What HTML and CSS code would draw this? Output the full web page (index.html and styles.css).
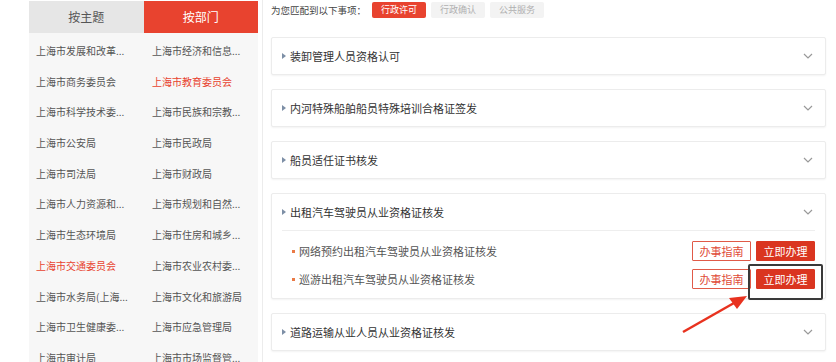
FILE: index.html
```html
<!DOCTYPE html>
<html lang="zh-CN">
<head>
    <meta charset="UTF-8">
    <title>按部门办事</title>
    <link rel="stylesheet" href="styles.css">
</head>
<body>
    <div class="page">
        <div class="side">
            <div class="tabs">
                <div class="tab">按主题</div>
                <div class="tab active">按部门</div>
            </div>
            <ul class="dept-list">
                <li>上海市发展和改革...</li>
                <li>上海市经济和信息...</li>
                <li>上海市商务委员会</li>
                <li class="on">上海市教育委员会</li>
                <li>上海市科学技术委...</li>
                <li>上海市民族和宗教...</li>
                <li>上海市公安局</li>
                <li>上海市民政局</li>
                <li>上海市司法局</li>
                <li>上海市财政局</li>
                <li>上海市人力资源和...</li>
                <li>上海市规划和自然...</li>
                <li>上海市生态环境局</li>
                <li>上海市住房和城乡...</li>
                <li class="on">上海市交通委员会</li>
                <li>上海市农业农村委...</li>
                <li>上海市水务局(上海...</li>
                <li>上海市文化和旅游局</li>
                <li>上海市卫生健康委...</li>
                <li>上海市应急管理局</li>
                <li>上海市审计局</li>
                <li>上海市市场监督管...</li>
            </ul>
        </div>

        <div class="main">
            <div class="filter">
                <span class="filter-label">为您匹配到以下事项：</span>
                <span class="tag active">行政许可</span>
                <span class="tag">行政确认</span>
                <span class="tag">公共服务</span>
            </div>

            <div class="card">
                <div class="card-head">
                    <span class="tri"></span>
                    <span class="card-title">装卸管理人员资格认可</span>
                    <svg class="chev" width="10" height="6" viewBox="0 0 10 6"><polyline points="1,1 5,5 9,1" fill="none" stroke="#999" stroke-width="1.2"/></svg>
                </div>
            </div>

            <div class="card">
                <div class="card-head">
                    <span class="tri"></span>
                    <span class="card-title">内河特殊船舶船员特殊培训合格证签发</span>
                    <svg class="chev" width="10" height="6" viewBox="0 0 10 6"><polyline points="1,1 5,5 9,1" fill="none" stroke="#999" stroke-width="1.2"/></svg>
                </div>
            </div>

            <div class="card">
                <div class="card-head">
                    <span class="tri"></span>
                    <span class="card-title">船员适任证书核发</span>
                    <svg class="chev" width="10" height="6" viewBox="0 0 10 6"><polyline points="1,1 5,5 9,1" fill="none" stroke="#999" stroke-width="1.2"/></svg>
                </div>
            </div>

            <div class="card">
                <div class="card-head">
                    <span class="tri"></span>
                    <span class="card-title">出租汽车驾驶员从业资格证核发</span>
                    <svg class="chev" width="10" height="6" viewBox="0 0 10 6"><polyline points="1,1 5,5 9,1" fill="none" stroke="#999" stroke-width="1.2"/></svg>
                </div>
                <div class="sub-list">
                    <div class="sub-item">
                        <span class="dot"></span>
                        <span class="sub-title">网络预约出租汽车驾驶员从业资格证核发</span>
                        <span class="btn btn-guide">办事指南</span>
                        <span class="btn btn-do">立即办理</span>
                    </div>
                    <div class="sub-item">
                        <span class="dot"></span>
                        <span class="sub-title">巡游出租汽车驾驶员从业资格证核发</span>
                        <span class="btn btn-guide">办事指南</span>
                        <span class="btn btn-do">立即办理</span>
                    </div>
                </div>
            </div>

            <div class="card">
                <div class="card-head">
                    <span class="tri"></span>
                    <span class="card-title">道路运输从业人员从业资格证核发</span>
                    <svg class="chev" width="10" height="6" viewBox="0 0 10 6"><polyline points="1,1 5,5 9,1" fill="none" stroke="#999" stroke-width="1.2"/></svg>
                </div>
            </div>
        </div>
    </div>

    <!-- annotation drawn over the screenshot -->
    <div class="mark-box"></div>
    <svg class="mark-arrow" width="836" height="362" viewBox="0 0 836 362">
        <line x1="683" y1="332" x2="734" y2="303" stroke="#e8321f" stroke-width="2.5"/>
        <polygon points="747,296 729,298 737,309" fill="#e8321f"/>
    </svg>
</body>
</html>
```

FILE: styles.css
```css
body {
    margin: 0;
    background-color: #fff;
    font-family: "Noto Sans CJK SC", "Noto Sans", sans-serif;
    color: #555;
    width: 836px;
    height: 362px;
    overflow: hidden;
    position: relative;
}

.page {
    display: flex;
    align-items: flex-start;
}

/* left: department list */
.side {
    width: 229px;
    margin-left: 29px;
    margin-top: 1px;
    background-color: #f7f7f7;
}

.tabs {
    display: flex;
}

.tab {
    flex: 1;
    height: 32px;
    line-height: 32px;
    text-align: center;
    font-size: 12px;
    background-color: #e6e6e6;
    color: #555;
}

.tab.active {
    background-color: #e8432f;
    color: #fff;
}

.dept-list {
    list-style: none;
    margin: 0;
    padding: 3px 0 0 7px;
    display: grid;
    grid-template-columns: 116px 106px;
}

.dept-list li {
    height: 30.7px;
    line-height: 30.7px;
    font-size: 10px;
    white-space: nowrap;
    color: #555;
}

.dept-list li.on {
    color: #e8432f;
}

/* right: matched items */
.main {
    flex: 1;
    margin-left: 4px;
    padding: 2px 10px 0 8px;
    border-left: 1px solid #ececec;
    min-height: 362px;
}

.filter {
    display: flex;
    align-items: center;
    height: 16px;
    margin-bottom: 19px;
}

.filter-label {
    font-size: 9.5px;
    color: #444;
    margin-right: 6px;
}

.tag {
    height: 16px;
    line-height: 16px;
    padding: 0 9px;
    margin-right: 5px;
    font-size: 9px;
    background-color: #f3f3f3;
    color: #b0b0b0;
    border-radius: 2px;
}

.tag.active {
    background-color: #e8432f;
    color: #fff;
}

.card {
    border: 1px solid #ececec;
    border-radius: 2px;
    box-shadow: 0 1px 2px rgba(0, 0, 0, 0.05);
    margin-bottom: 14px;
    background-color: #fff;
}

.card-head {
    display: flex;
    align-items: center;
    height: 36px;
    padding: 0 12px 0 10px;
}

.tri {
    width: 0;
    height: 0;
    border-top: 3px solid transparent;
    border-bottom: 3px solid transparent;
    border-left: 4px solid #7d8fa6;
    margin-right: 4px;
}

.card-title {
    flex: 1;
    font-size: 11px;
    color: #333;
}

.chev {
    display: block;
}

.sub-list {
    margin: 0 10px;
    border-top: 1px solid #eee;
    padding: 10px 0 9px 10px;
    display: flex;
    flex-direction: column;
    gap: 8px;
}

.sub-item {
    display: flex;
    align-items: center;
    height: 20px;
}

.dot {
    width: 3px;
    height: 3px;
    background-color: #ea7a46;
    margin-right: 4px;
}

.sub-title {
    flex: 1;
    font-size: 11px;
    color: #555;
}

.btn {
    box-sizing: border-box;
    height: 20px;
    line-height: 18px;
    width: 59px;
    text-align: center;
    font-size: 11px;
    border: 1px solid #e05a48;
    border-radius: 1px;
}

.btn-guide {
    color: #e04a36;
    background-color: #fff;
    margin-right: 5px;
}

.btn-do {
    color: #fff;
    background-color: #da3520;
    border-color: #da3520;
}

/* annotation */
.mark-box {
    position: absolute;
    left: 748px;
    top: 264px;
    width: 71px;
    height: 32px;
    border: 2px solid #3a3a3a;
    border-radius: 2px;
}

.mark-arrow {
    position: absolute;
    left: 0;
    top: 0;
    pointer-events: none;
}
```
